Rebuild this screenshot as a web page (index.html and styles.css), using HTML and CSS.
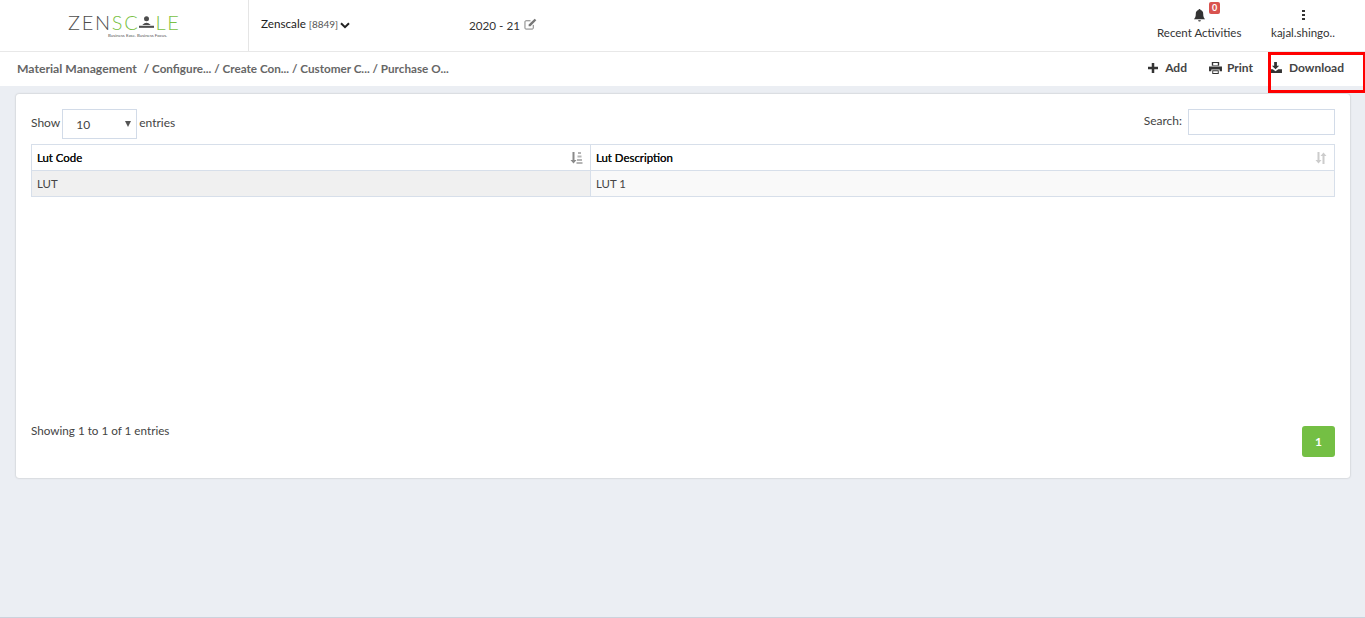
FILE: index.html
```html
<!DOCTYPE html>
<html lang="en">
<head>
<meta charset="utf-8">
<title>Zenscale</title>
<link rel="stylesheet" href="styles.css">
</head>
<body>
<header class="topbar">
  <div class="brand">
    <div class="logo">
      <div class="logo-word"><span class="grey">ZEN</span><span class="green">SC</span><svg class="logo-a" viewBox="0 0 18 16" width="15" height="14"><circle cx="9" cy="4" r="3" fill="#4d4d4d"/><path d="M4 11.5q5-5 10 0z" fill="#4d4d4d"/><rect x="0" y="12.5" width="18" height="2.5" fill="#4d4d4d"/></svg><span class="green">LE</span></div>
      <div class="logo-tag">Business Ease. Business Focus.</div>
    </div>
  </div>
  <div class="org">Zenscale <small>[8849]</small>
    <svg class="chev" viewBox="0 0 10 7" width="10" height="7"><path d="M1 1.2l4 4 4-4" fill="none" stroke="#222" stroke-width="2"/></svg>
  </div>
  <div class="year">2020 - 21
    <svg class="edit" viewBox="0 0 14 13" width="13" height="12"><path d="M10 7.500V11a1 1 0 0 1-1 1H2a1 1 0 0 1-1-1V4a1 1 0 0 1 1-1h5" fill="none" stroke="#777" stroke-width="1"/><path d="M5 7l6.500-6.300 1.800 1.800L7 9H5z" fill="#777"/></svg>
  </div>
  <div class="top-actions">
    <div class="activity">
      <div class="bell-wrap">
        <svg viewBox="0 0 14 14" width="13" height="13"><path d="M7 0a1 1 0 0 1 1 1.200C10.200 1.700 11 3.400 11 5.500c0 3 .8 4.500 2 5.500H1c1.200-1 2-2.500 2-5.500C3 3.400 3.800 1.700 6 1.200A1 1 0 0 1 7 0zM5.500 12h3a1.500 1.500 0 0 1-3 0z" fill="#333"/></svg>
        <span class="badge">0</span>
      </div>
      <div class="top-label">Recent Activities</div>
    </div>
    <div class="user">
      <div class="dots"><i></i><i></i><i></i></div>
      <div class="top-label">kajal.shingo..</div>
    </div>
  </div>
</header>

<nav class="crumbbar">
  <div class="crumbs"><b>Material Management</b><span>/ Configure... / Create Con... / Customer C... / Purchase O...</span></div>
  <div class="tools">
    <a class="tool tool-add"><svg viewBox="0 0 12 12" width="10" height="10"><path d="M4.500 0h3v4.500H12v3H7.500V12h-3V7.500H0v-3h4.500z" fill="#333"/></svg>Add</a>
    <a class="tool tool-print"><svg viewBox="0 0 14 13" width="13" height="12"><path d="M3 0h8v4H3zM0 5h14v5h-2.500V8h-9v2H0zM3.500 9h7v4h-7z" fill="#333" fill-rule="evenodd"/><path d="M4.500 1h5v2.500h-5zM4.500 10h5v2h-5z" fill="#fff"/></svg>Print</a>
    <a class="tool tool-download"><svg viewBox="0 0 13 12" width="12" height="11"><path d="M4.500 0h3v4H10L6 8 2 4h2.500zM0 8h3l3 2 3-2h4v4H0z" fill="#333"/></svg>Download</a>
  </div>
  <div class="highlight"></div>
</nav>

<main class="card">
  <div class="table-top">
    <div class="length">Show
      <div class="select"><span>10</span><i class="caret"></i></div>
      entries</div>
    <div class="search">Search: <div class="search-box"></div></div>
  </div>
  <div class="table">
    <div class="cell head col-a">Lut Code
      <svg class="sort" viewBox="0 0 13 12" width="13" height="12"><path d="M2.500 0h2v8H6.500l-3 3.500L.5 8h2z" fill="#8a8a8a"/><path d="M8 0h3v2H8zM7.500 3.500h4v2h-4zM7 7h5v2H7zM6.500 10h6v2h-6z" fill="#b5b5b5"/></svg>
    </div>
    <div class="cell head col-b">Lut Description
      <svg class="sort" viewBox="0 0 12 12" width="12" height="12"><path d="M2.500 0h2v8H6.500l-3 3.500L.5 8h2z" fill="#ccc"/><path d="M7.500 12h2V4h2l-3-3.500-3 3.500h2z" fill="#ccc"/></svg>
    </div>
    <div class="cell body col-a shade-a">LUT</div>
    <div class="cell body col-b shade-b">LUT 1</div>
  </div>
  <div class="table-foot">
    <div class="info">Showing 1 to 1 of 1 entries</div>
    <div class="page">1</div>
  </div>
</main>
</body>
</html>
```
FILE: styles.css
```css
* { box-sizing: border-box; }
html, body { height: 100%; }
body {
  margin: 0;
  height: 618px;
  overflow: hidden;
  background: #ebeef3;
  border-bottom: 1px solid #ccd2dc;
  font-family: Lato, "Liberation Sans", sans-serif;
  font-size: 11.7px;
  color: #333;
}
.topbar {
  height: 52px;
  background: #fff;
  border-bottom: 1px solid #e8e8e8;
  display: flex;
  align-items: stretch;
}
.brand {
  width: 249px;
  border-right: 1px solid #e5e5e5;
  padding: 12px 0 0 68px;
}
.logo-word {
  display: flex;
  align-items: center;
  height: 20px;
  font-size: 20px;
  font-weight: 300;
  letter-spacing: 1.7px;
  line-height: 20px;
}
.grey { color: #4d4d4d; }
.green { color: #7ac143; }
.logo-a { margin: 0 1px 0 0; }
.logo-tag {
  font-size: 4.4px;
  line-height: 6px;
  color: #555;
  margin: 1px 0 0 40px;
  white-space: nowrap;
}
.org {
  width: 208px;
  padding: 16px 0 0 12px;
  color: #222;
  font-size: 11.7px;
  line-height: 15px;
}
.org small { font-size: 10px; color: #555; }
.chev { margin-left: -1px; vertical-align: -1px; }
.year {
  padding: 18px 0 0 12px;
  color: #333;
  font-size: 11.7px;
  line-height: 15px;
}
.edit { margin-left: 1px; vertical-align: 0; }
.top-actions {
  margin-left: auto;
  display: flex;
  padding-right: 30px;
}
.activity, .user { text-align: center; padding-top: 8px; }
.activity { width: 84px; }
.user { width: 64px; margin-left: 30px; }
.bell-wrap { position: relative; height: 14px; padding-top: 1px; line-height: 14px; }
.badge {
  position: absolute;
  left: 52px;
  top: -6px;
  width: 11px;
  height: 12px;
  background: #d9534f;
  color: #fff;
  border-radius: 2px;
  font-size: 9px;
  font-weight: 700;
  line-height: 12px;
  text-align: center;
}
.dots { height: 14px; display: flex; flex-direction: column; align-items: center; gap: 2px; padding-top: 2px; }
.dots i { width: 3px; height: 2px; background: #333; display: block; }
.top-label { margin-top: 3px; font-size: 11.5px; line-height: 16px; color: #333; white-space: nowrap; }
.crumbbar {
  position: relative;
  height: 34px;
  background: #fff;
  display: flex;
  align-items: center;
  justify-content: space-between;
  padding: 0 0 0 17px;
}
.crumbs { color: #666; font-size: 12.2px; display: flex; gap: 7px; margin-top: -1px; align-items: baseline; }
.crumbs b { font-weight: 700; color: #666; }
.crumbs span { font-weight: 700; color: #666; font-size: 11.7px; }
.tools { display: flex; font-weight: 700; color: #444; font-size: 12px; margin-top: -3px; }
.tool { display: flex; align-items: center; gap: 7px; }
.tool-add { margin-right: 21px; padding-left: 1px; }
.tool-print { margin-right: 17px; gap: 5px; padding-left: 1px; }
.tool-download { width: 95px; gap: 7px; }
.highlight {
  position: absolute;
  right: 0;
  top: 0;
  width: 97px;
  height: 41px;
  border: 3px solid #f00;
  border-right-width: 2px;
  pointer-events: none;
}
.card {
  margin: 8px 15px 0 16px;
  height: 384px;
  background: #fff;
  border-radius: 3px;
  box-shadow: 0 0 2px rgba(0,0,0,.25);
  padding: 15px 15px 0;
  position: relative;
}
.table-top {
  display: flex;
  justify-content: space-between;
  height: 35px;
  color: #444;
  font-size: 12px;
}
.length { display: flex; align-items: flex-start; gap: 2px; line-height: 28px; }
.select {
  width: 75px;
  height: 30px;
  border: 1px solid #d2dbe8;
  position: relative;
  padding-left: 13px;
  line-height: 29px;
  font-size: 12px;
  color: #444;
}
.caret {
  position: absolute;
  right: 5px;
  top: 11px;
  border-left: 3px solid transparent;
  border-right: 3px solid transparent;
  border-top: 6px solid #555;
}
.search { display: flex; gap: 6px; line-height: 24px; }
.search-box {
  width: 147px;
  height: 26px;
  border: 1px solid #d2dbe8;
}
.table {
  display: grid;
  grid-template-columns: 559px 744px;
  grid-auto-rows: 26px;
  border: 1px solid #d7dfea;
  border-width: 1px 0 0 1px;
  width: 1304px;
  height: 53px;
}
.cell {
  border-right: 1px solid #d7dfea;
  border-bottom: 1px solid #d7dfea;
  padding-left: 5px;
  line-height: 25px;
  position: relative;
}
.head { color: #111; font-weight: 400; text-shadow: 0 0 .4px #111; font-size: 11.4px; }
.body { color: #444; font-size: 11.4px; }
.shade-a { background: #f0f0f0; }
.shade-b { background: #f9f9f9; }
.sort { position: absolute; right: 7px; top: 7px; }
.table-foot {
  display: flex;
  justify-content: space-between;
  align-items: flex-start;
  margin-top: 224px;
  padding-top: 1px;
  color: #444;
}
.info { line-height: 16px; margin-top: 0; }
.page {
  width: 33px;
  height: 31px;
  background: #74bf44;
  color: #fff;
  border-radius: 3px;
  font-weight: 700;
  font-size: 12px;
  text-align: center;
  line-height: 31px;
  margin-top: 4px;
}
```
